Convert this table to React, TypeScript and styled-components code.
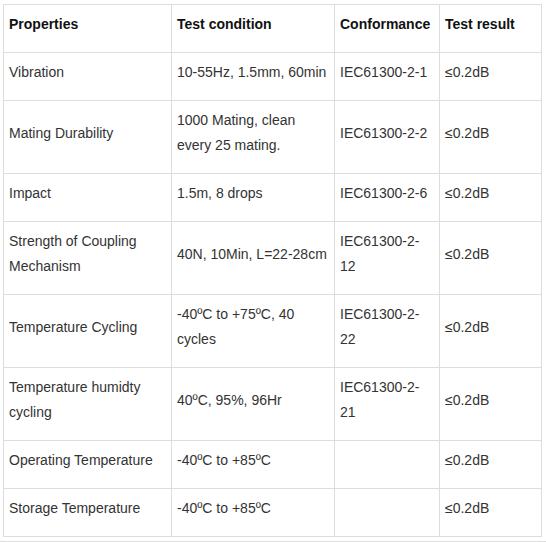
import React from "react";
import styled, { createGlobalStyle } from "styled-components";

const Global = createGlobalStyle`
  html, body { margin: 0; padding: 0; background: #fff; }
  body { font-family: Arial, "Liberation Sans", sans-serif; }
`;

const Page = styled.div`
  width: 546px;
  height: 542px;
  display: flex;
  flex-direction: column;
  box-sizing: border-box;
  padding-top: 4px;
`;

const TableWrap = styled.div`
  padding-left: 3px;
  flex: 1;
`;

const Table = styled.table`
  border-collapse: collapse;
  table-layout: fixed;
  width: 538px;
  font-family: Arial, "Liberation Sans", sans-serif;
  font-size: 14px;
  line-height: 25px;
  color: #333;
`;

const Col = styled.col<{ $w: number }>`
  width: ${(p) => p.$w}px;
`;

const Th = styled.th`
  border: 1px solid #ddd;
  padding: 7px 5px 15px;
  text-align: left;
  vertical-align: middle;
  font-weight: bold;
  color: #111;
`;

const Td = styled.td`
  border: 1px solid #ddd;
  padding: 7px 5px 15px;
  text-align: left;
  vertical-align: middle;
`;

const BottomRule = styled.div`
  height: 1px;
  background: #dedede;
  margin-bottom: 0;
`;

const rows: [string, string, string, string][] = [
  ["Vibration", "10-55Hz, 1.5mm, 60min", "IEC61300-2-1", "≤0.2dB"],
  ["Mating Durability", "1000 Mating, clean every 25 mating.", "IEC61300-2-2", "≤0.2dB"],
  ["Impact", "1.5m, 8 drops", "IEC61300-2-6", "≤0.2dB"],
  ["Strength of Coupling Mechanism", "40N, 10Min, L=22-28cm", "IEC61300-2-12", "≤0.2dB"],
  ["Temperature Cycling", "-40ºC to +75ºC, 40 cycles", "IEC61300-2-22", "≤0.2dB"],
  ["Temperature humidty cycling", "40ºC, 95%, 96Hr", "IEC61300-2-21", "≤0.2dB"],
  ["Operating Temperature", "-40ºC to +85ºC", "", "≤0.2dB"],
  ["Storage Temperature", "-40ºC to +85ºC", "", "≤0.2dB"],
];

export default function App() {
  return (
    <Page>
      <Global />
      <TableWrap>
        <Table>
          <colgroup>
            <Col $w={168} />
            <Col $w={163} />
            <Col $w={105} />
            <Col $w={102} />
          </colgroup>
          <thead>
            <tr>
              <Th>Properties</Th>
              <Th>Test condition</Th>
              <Th>Conformance</Th>
              <Th>Test result</Th>
            </tr>
          </thead>
          <tbody>
            {rows.map((r, i) => (
              <tr key={i}>
                {r.map((c, j) => (
                  <Td key={j}>{c}</Td>
                ))}
              </tr>
            ))}
          </tbody>
        </Table>
      </TableWrap>
      <BottomRule />
    </Page>
  );
}
